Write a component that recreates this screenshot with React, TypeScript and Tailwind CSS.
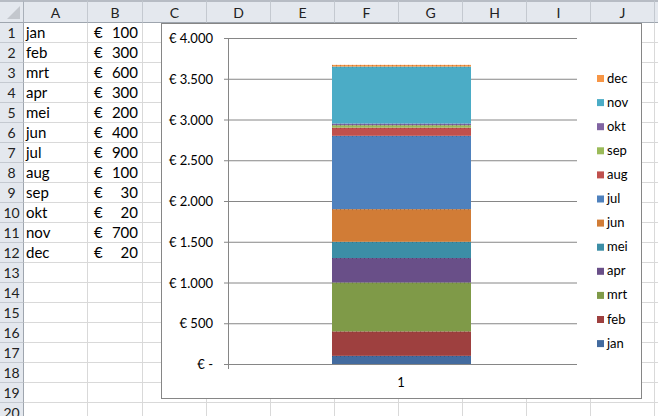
// Excel sheet with a stacked column chart of monthly amounts.

const COLS = ['A', 'B', 'C', 'D', 'E', 'F', 'G', 'H', 'I', 'J', ''];

const DATA = [
  { m: 'jan', v: 100, c: '#436b9f' },
  { m: 'feb', v: 300, c: '#9e403f' },
  { m: 'mrt', v: 600, c: '#7f9a48' },
  { m: 'apr', v: 300, c: '#694f88' },
  { m: 'mei', v: 200, c: '#3c8ea6' },
  { m: 'jun', v: 400, c: '#d17c36' },
  { m: 'jul', v: 900, c: '#4f81bd' },
  { m: 'aug', v: 100, c: '#c0504d' },
  { m: 'sep', v: 30, c: '#9bbb59' },
  { m: 'okt', v: 20, c: '#8064a2' },
  { m: 'nov', v: 700, c: '#4bacc6' },
  { m: 'dec', v: 20, c: '#f79646' },
];

const TICKS = ['€ -', '€ 500', '€ 1.000', '€ 1.500', '€ 2.000', '€ 2.500', '€ 3.000', '€ 3.500', '€ 4.000'];

// chart inner origin on the page is (162, 24)
const px = (x: number) => x - 162;
const py = (y: number) => y - 24;
const BASE = 364;
const SCALE = 326 / 4000;

function Chart() {
  let acc = 0;
  const segs = DATA.map((d) => {
    const y0 = BASE - acc * SCALE;
    acc += d.v;
    const y1 = BASE - acc * SCALE;
    return { ...d, y0, y1 };
  });

  return (
    <div className="absolute left-[161px] top-[23px] w-[481px] h-[376px] border border-[#868686] bg-white">
      <svg width="479" height="374" className="block" style={{ fontFamily: 'Lato, "Liberation Sans", sans-serif' }}>
        {TICKS.map((t, i) => {
          const y = py(BASE - i * 500 * SCALE) + 0.5;
          return (
            <g key={t}>
              <line x1={px(224)} x2={px(577)} y1={y} y2={y} stroke="#868686" />
              <text x={px(213)} y={y + 4.5} textAnchor="end" fontSize="13" fill="#000">
                {t}
              </text>
            </g>
          );
        })}
        <line x1={px(228) + 0.5} x2={px(228) + 0.5} y1={py(38)} y2={py(369)} stroke="#868686" />

        {segs.map((s) => (
          <g key={s.m}>
            <rect x={px(332)} y={py(s.y1)} width={139} height={Math.max(s.y0 - s.y1, 1.2)} fill={s.c} />
            <line
              x1={px(332)}
              x2={px(471)}
              y1={py(s.y1) + 0.5}
              y2={py(s.y1) + 0.5}
              stroke={s.c}
              strokeDasharray="1 3"
              opacity="0.8"
              style={{ filter: 'brightness(0.75)' }}
            />
          </g>
        ))}

        <text x={px(401)} y={py(387)} textAnchor="middle" fontSize="13" fill="#000">
          1
        </text>

        {[...DATA].reverse().map((d, i) => {
          const cy = py(78) + i * 24.1;
          return (
            <g key={d.m}>
              <rect x={px(597)} y={cy - 3} width={7} height={7} fill={d.c} />
              <text x={px(607)} y={cy + 4.5} fontSize="13" fill="#000">
                {d.m}
              </text>
            </g>
          );
        })}
      </svg>
    </div>
  );
}

export default function App() {
  const rows = Array.from({ length: 20 }, (_, i) => i + 1);
  return (
    <div
      className="relative w-[658px] h-[416px] overflow-hidden bg-white text-[15px] text-black"
      style={{ fontFamily: 'Lato, "Liberation Sans", sans-serif' }}
    >
      <div className="grid grid-cols-[24px_64px_55px_64px_64px_64px_64px_64px_64px_64px_64px_64px]">
        {/* header row */}
        <div className="relative h-[23px] bg-[#e4e8ee] border-t-2 border-t-[#b7bcc4] border-r border-b border-r-[#a9b0b9] border-b-[#9ea5ae]">
          <svg className="absolute right-[3px] bottom-[3px]" width="13" height="13">
            <polygon points="13,0 13,13 0,13" fill="#c3c7cd" />
          </svg>
        </div>
        {COLS.map((c, i) => (
          <div
            key={i}
            className="h-[23px] bg-[#e4e8ee] border-t-2 border-t-[#b7bcc4] border-r border-b border-r-[#c4c9d0] border-b-[#9ea5ae] flex items-center justify-center text-[14px] text-[#222]"
          >
            {c}
          </div>
        ))}

        {rows.map((r) => {
          const d = DATA[r - 1];
          return [
            <div
              key={`h${r}`}
              className="h-[20px] bg-[#e4e8ee] border-r border-b border-r-[#9ea5ae] border-b-[#c4c9d0] flex items-center justify-center text-[14px] text-[#222]"
            >
              {r}
            </div>,
            <div key={`a${r}`} className="h-[20px] border-r border-b border-[#d9d9d9] flex items-center pl-[2px] leading-none">
              {d ? d.m : ''}
            </div>,
            <div key={`b${r}`} className="h-[20px] border-r border-b border-[#d9d9d9] flex items-center justify-between pl-[6px] pr-[4px] leading-none">
              {d ? (
                <>
                  <span>€</span>
                  <span>{d.v}</span>
                </>
              ) : null}
            </div>,
            ...COLS.slice(2).map((_, i) => (
              <div key={`c${r}-${i}`} className="h-[20px] border-r border-b border-[#d9d9d9]" />
            )),
          ];
        })}
      </div>
      <Chart />
    </div>
  );
}
